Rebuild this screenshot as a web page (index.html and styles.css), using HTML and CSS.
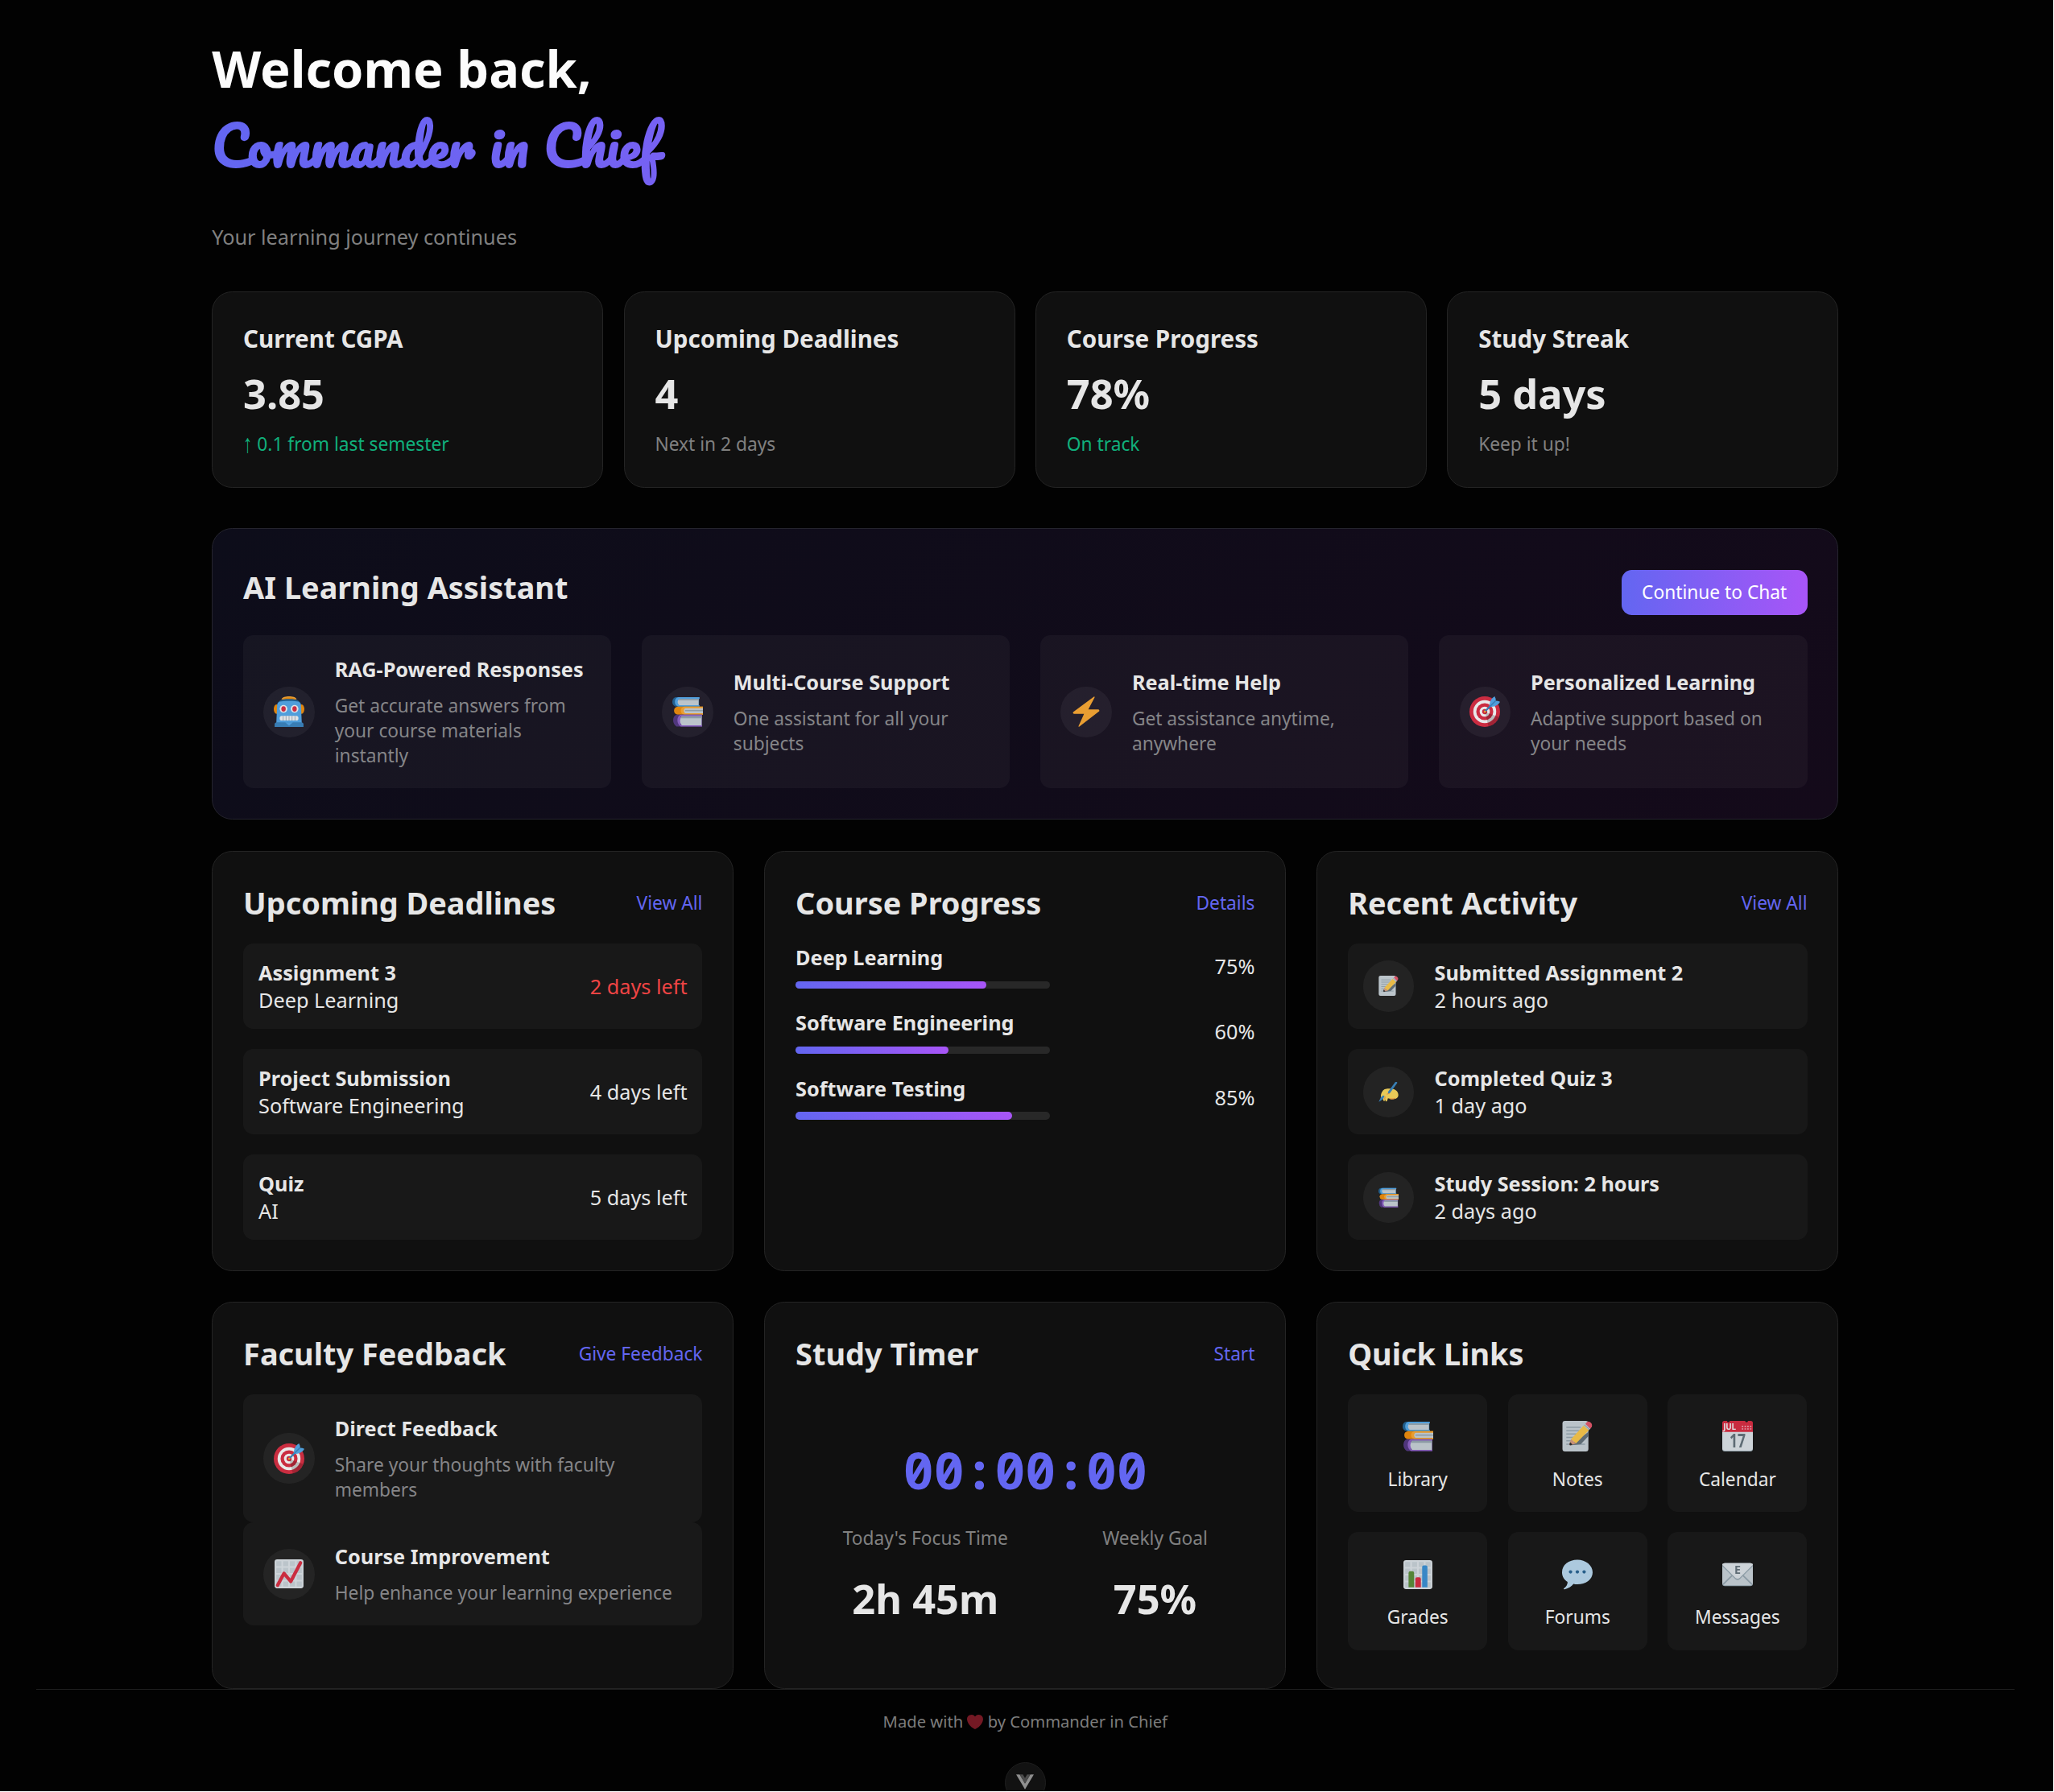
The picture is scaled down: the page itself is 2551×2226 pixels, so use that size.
FILE: index.html
```html
<!DOCTYPE html>
<html lang="en">
<head>
<meta charset="utf-8">
<title>Learning Dashboard</title>
<link rel="stylesheet" href="styles.css">
</head>
<body>
<svg class="sprite" aria-hidden="true">
  <symbol id="robot" viewBox="0 0 36 36">
    <ellipse cx="3.2" cy="15" rx="3.2" ry="5.5" fill="#f4900c"/><ellipse cx="32.8" cy="15" rx="3.2" ry="5.5" fill="#f4900c"/>
    <path d="M9 3.5C10 1 14 0 18 0s8 1 9 3.5z" fill="#ffac33"/><path d="M10 3.5C12 1.8 15 1.5 18 1.5s6 .3 8 2z" fill="#f4900c"/>
    <path d="M4 9c2-4 4-6 14-6s12 2 14 6z" fill="#269"/>
    <path d="M4 10c1-4 3-4.500 14-4.500s13 .500 14 4.500l1 22H3z" fill="#55acee"/>
    <circle cx="11.500" cy="14.800" r="4.500" fill="#f5f8fa"/><circle cx="24.500" cy="14.800" r="4.500" fill="#f5f8fa"/>
    <ellipse cx="11.500" cy="14.800" rx="2.600" ry="3.200" fill="#dd2e44"/><ellipse cx="24.500" cy="14.800" rx="2.600" ry="3.200" fill="#dd2e44"/>
    <rect x="7" y="23" width="22" height="5.500" rx="2.500" fill="#f5f8fa"/>
    <path d="M11 23v5.500M14.500 23v5.500M18 23v5.500M21.500 23v5.500M25 23v5.500" stroke="#aab8c2"/>
    <path d="M1 36v-3q0-2.500 3-2.500h28q3 0 3 2.500v3z" fill="#3b88c3"/><path d="M13.500 30.500h9L18 34.500z" fill="#55acee"/>
  </symbol>
  <symbol id="books" viewBox="0 0 36 36">
    <path d="M31.500 1H4Q0 2 0 6.500T4 12h27.500z" fill="#269"/><path d="M32 1H7Q3 2 3 6.500T7 12h25v-1.500H8V3h24z" fill="#55acee"/><path d="M31 3H8q-3.500 3.500 0 7.500h23z" fill="#ccd6dd"/><path d="M31 3H8l-.7 1.700H31z" fill="#99aab5"/>
    <path d="M36 12H6q-4 1-4 4.700T6 21.500h30z" fill="#f4900c"/><path d="M36 12H14q-4 1-4 4.700t4 4.800h22V20H15v-6h21z" fill="#ffac33"/><path d="M36 14H15q-3 3 0 6h21z" fill="#ccd6dd"/><path d="M36 16H15v1.500h21z" fill="#99aab5"/>
    <path d="M35 21.500H5Q1 23 1 28t4 7.500h30z" fill="#553986"/><path d="M35 21.500H10Q6 23 6 28t4 7.500h25V34H10V23.500h25z" fill="#9266cc"/><path d="M34.500 23.500H11q-4 5 0 10.500h23.500z" fill="#ccd6dd"/><path d="M34.500 23.500H11l-1 2.300h24.500z" fill="#99aab5"/>
  </symbol>
  <symbol id="bolt" viewBox="0 0 36 36">
    <path d="M27 .500 2.700 18.500q-.8 1.800 1 2H15.500L9 35q-.2 1.200 1 .6L33.300 17.600q.7-1.600-1-2.100H20.500L28 1.200Q28 0 27 .500z" fill="#ffac33"/>
  </symbol>
  <symbol id="target" viewBox="0 0 36 36">
    <circle cx="18" cy="18" r="18" fill="#dd2e44"/><circle cx="18" cy="18" r="13.500" fill="#fff"/><circle cx="18" cy="18" r="10" fill="#dd2e44"/><circle cx="18" cy="18" r="6" fill="#fff"/><circle cx="18" cy="18" r="3" fill="#dd2e44"/>
    <path d="m18.200 18.200 4.200 17.200c5.500-1.500 10-5.500 12.300-11z" fill="#000" opacity=".2"/>
    <path d="m18 18 9-9" stroke="#3b88c3" stroke-width="2.200"/><circle cx="18.200" cy="18" r="1.300" fill="#ffac33"/>
    <path d="M23.500 12.500C23.500 6 26 2 29.700 0q1.500 2.500 1.300 5.200 2.800 0 5 1.300c-2 4-6 6-12.500 6z" fill="#55acee"/><path d="M22.500 13.500 31 5" stroke="#3b88c3" stroke-width="1.400"/>
  </symbol>
  <symbol id="memo" viewBox="0 0 36 36">
    <rect x=".5" width="30.500" height="36" rx="3" fill="#ccd6dd"/>
    <path d="M5 7.500h17M5 11.500h19M5 15.500h14M5 19.500h12M5 23.500h7M5 27.500h22" stroke="#99aab5" stroke-width="1.400"/>
    <path d="m9 29 13-1.500 9-9.500v-5z" fill="#66757f"/>
    <path d="M10.500 21.500 25.500 5.500l6 5.500-15 15.500z" fill="#ffcc4d"/><path d="m10.500 21.500 6 5-7 2.300q-1.300-.5-.8-1.800z" fill="#d99e82"/><path d="m9.500 25-.8 2.500q0 1.300 1.400 1.200l2.300-.7z" fill="#292f33"/>
    <path d="m25.500 5.500 2-2 6 5.500-2 2z" fill="#ccd6dd"/><path d="m26.300 4.700 6 5.500" stroke="#99aab5"/><path d="m27.500 3.500 2-2.200Q31 0 33.500 2T35 7l-1.800 2.200z" fill="#ea596e"/>
  </symbol>
  <symbol id="writing" viewBox="0 0 36 36">
    <path d="M7 17c3-5 8-5 13-5 9 0 15 4 15.500 10.500C36 29 30 31 24 30.500c-3 0-5-1.500-7-1.500l-1.500 5q-2 1.500-3 0L12 31l-1 3q-2.500.5-2.500-2L8 29q-3 .5-3.500-2C4 23 5 20 7 17z" fill="#ffdc5d"/>
    <path d="M20 15c2 3-1 6-5 7M20 30c4 1 7 .5 10-1M12 26l-1 5" stroke="#ef9645" stroke-width="1.600" fill="none"/>
    <path d="M31.500 1.500 19 18.500" stroke="#3b88c3" stroke-width="4" stroke-linecap="round"/><path d="m11 25-3 6-7.500 4.500L4 28l4-4z" fill="#3b88c3"/>
  </symbol>
  <symbol id="rise" viewBox="0 0 36 36">
    <rect x="1" y="1" width="34" height="34" rx="3" fill="#e1e8ed"/>
    <path d="M3 3h6v6H3zM11 3h6v6h-6zM19 3h6v6h-6zM27 3h6v6h-6zM3 11h6v6H3zM11 11h6v6h-6zM19 11h6v6h-6zM27 11h6v6h-6zM3 19h6v6H3zM11 19h6v6h-6zM19 19h6v6h-6zM27 19h6v6h-6zM3 27h6v6H3zM11 27h6v6h-6zM19 27h6v6h-6zM27 27h6v6h-6z" fill="#ccd6dd"/>
    <path d="m4.500 31.500 7.500-14 8 9.500L31.500 5" fill="none" stroke="#dd2e44" stroke-width="4" stroke-linecap="round" stroke-linejoin="round"/>
  </symbol>
  <symbol id="calendar" viewBox="0 0 36 36">
    <rect y="4" width="36" height="32" rx="3" fill="#99aab5"/><rect y="3" width="36" height="32" rx="3" fill="#e1e8ed"/>
    <path d="M0 13V2.500Q0 0 2.500 0h3a1.700 1.700 0 0 0 3.400 0h18a1.700 1.700 0 0 0 3.400 0h3.200Q36 0 36 2.500V13z" fill="#dd2e44"/>
    <path d="M23 6.500h12M23 9.500h12" stroke="#f4abba" stroke-width="1.600" stroke-dasharray="1.700 1.500"/>
    <text x="1.200" y="10.600" class="cal-month" fill="#f5f8fa" textLength="15">JUL</text>
    <text x="8.500" y="31.600" class="cal-day" fill="#66757f" textLength="19" lengthAdjust="spacingAndGlyphs">17</text>
  </symbol>
  <symbol id="bars" viewBox="0 0 36 36">
    <rect x="1" y="1" width="34" height="34" rx="3" fill="#e1e8ed"/>
    <path d="M3 3h6v6H3zM11 3h6v6h-6zM19 3h6v6h-6zM27 3h6v6h-6zM3 11h6v6H3zM11 11h6v6h-6zM19 11h6v6h-6zM27 11h6v6h-6zM3 19h6v6H3zM11 19h6v6h-6zM19 19h6v6h-6zM27 19h6v6h-6zM3 27h6v6H3zM11 27h6v6h-6zM19 27h6v6h-6zM27 27h6v6h-6z" fill="#ccd6dd"/>
    <path d="M7 33V16q0-2 2-2h2.500q2 0 2 2v17z" fill="#5c913b"/><path d="M15 33V23q0-2 2-2h2.500q2 0 2 2v10z" fill="#dd2e44"/><path d="M23 33V9q0-2 2-2h2.200q2 0 2 2v24z" fill="#3b94d9"/>
  </symbol>
  <symbol id="speech" viewBox="0 0 36 36">
    <path d="M18 .500C8 .500 0 6.500 0 15.300c0 4.700 2.500 8.700 6.500 11.300.2 3-1.500 6-4.500 7.800q-.3 1 1 .8c5-1.200 8.500-3.700 10.500-6.300q2.200.5 4.500.5c10 0 18-6 18-14.100S28 .500 18 .500z" fill="#bdddf4"/>
    <circle cx="10" cy="14.800" r="2" fill="#2a6797"/><circle cx="18" cy="14.800" r="2" fill="#2a6797"/><circle cx="26" cy="14.800" r="2" fill="#2a6797"/>
  </symbol>
  <symbol id="mail" viewBox="0 0 36 36">
    <rect y="5" width="36" height="26.500" rx="3" fill="#99aab5"/><rect y="4.500" width="36" height="26" rx="3" fill="#ccd6dd"/>
    <path d="m1 29.500 11-11M35 29.500l-11-11" stroke="#99aab5" stroke-width="1.700"/>
    <path d="M0 8q0-3.500 3-3.500h30q3 0 3 3.500L20.500 23.500q-2.500 2-5 0z" fill="#99aab5"/><path d="M0 6.500q0-2 3-2h30q3 0 3 2L20.500 21.700q-2.500 2-5 0z" fill="#e1e8ed"/>
    <text x="18" y="17.500" class="mail-letter" fill="#66757f" text-anchor="middle">E</text>
  </symbol>
  <symbol id="heart" viewBox="0 0 36 36">
    <path d="M35.900 11.800a9.900 9.900 0 0 0-17.900-5.800A9.900 9.900 0 0 0 .4 14.200C1.800 22.500 11.200 31.600 18 34c6.800-2.400 16.200-11.500 17.600-19.800q.3-1.200.3-2.400z" fill="#dd2e44"/>
  </symbol>
</svg>

<div class="page">
  <main class="container">
    <header class="hero">
      <h1 class="hero-title">Welcome back,</h1>
      <div class="hero-name"><span>Commander in Chief</span></div>
      <p class="hero-sub">Your learning journey continues</p>
    </header>

    <section class="stats">
      <div class="card"><h3 class="stat-label">Current CGPA</h3><div class="stat-value">3.85</div><div class="note good"><span class="arrow">↑</span> 0.1 from last semester</div></div>
      <div class="card"><h3 class="stat-label">Upcoming Deadlines</h3><div class="stat-value">4</div><div class="note">Next in 2 days</div></div>
      <div class="card"><h3 class="stat-label">Course Progress</h3><div class="stat-value">78%</div><div class="note good">On track</div></div>
      <div class="card"><h3 class="stat-label">Study Streak</h3><div class="stat-value">5 days</div><div class="note">Keep it up!</div></div>
    </section>

    <section class="card assistant">
      <div class="card-head"><h2>AI Learning Assistant</h2><a class="button">Continue to Chat</a></div>
      <div class="features">
        <div class="feature"><span class="badge"><svg class="icon"><use href="#robot"/></svg></span><div><h4>RAG-Powered Responses</h4><p>Get accurate answers from your course materials instantly</p></div></div>
        <div class="feature"><span class="badge"><svg class="icon"><use href="#books"/></svg></span><div><h4>Multi-Course Support</h4><p>One assistant for all your subjects</p></div></div>
        <div class="feature"><span class="badge"><svg class="icon"><use href="#bolt"/></svg></span><div><h4>Real-time Help</h4><p>Get assistance anytime, anywhere</p></div></div>
        <div class="feature"><span class="badge"><svg class="icon"><use href="#target"/></svg></span><div><h4>Personalized Learning</h4><p>Adaptive support based on your needs</p></div></div>
      </div>
    </section>

    <section class="grid">
      <div class="card">
        <div class="card-head"><h2>Upcoming Deadlines</h2><a class="link">View All</a></div>
        <div class="list">
          <div class="item"><div class="grow"><h4>Assignment 3</h4><p>Deep Learning</p></div><span class="urgent">2 days left</span></div>
          <div class="item"><div class="grow"><h4>Project Submission</h4><p>Software Engineering</p></div><span>4 days left</span></div>
          <div class="item"><div class="grow"><h4>Quiz</h4><p>AI</p></div><span>5 days left</span></div>
        </div>
      </div>

      <div class="card">
        <div class="card-head"><h2>Course Progress</h2><a class="link">Details</a></div>
        <div class="list">
          <div class="course"><div><h4>Deep Learning</h4><div class="track"><div class="fill" style="width:75%"></div></div></div><span>75%</span></div>
          <div class="course"><div><h4>Software Engineering</h4><div class="track"><div class="fill" style="width:60%"></div></div></div><span>60%</span></div>
          <div class="course"><div><h4>Software Testing</h4><div class="track"><div class="fill" style="width:85%"></div></div></div><span>85%</span></div>
        </div>
      </div>

      <div class="card">
        <div class="card-head"><h2>Recent Activity</h2><a class="link">View All</a></div>
        <div class="list">
          <div class="item"><span class="badge"><svg class="icon small"><use href="#memo"/></svg></span><div><h4>Submitted Assignment 2</h4><p>2 hours ago</p></div></div>
          <div class="item"><span class="badge"><svg class="icon small"><use href="#writing"/></svg></span><div><h4>Completed Quiz 3</h4><p>1 day ago</p></div></div>
          <div class="item"><span class="badge"><svg class="icon small"><use href="#books"/></svg></span><div><h4>Study Session: 2 hours</h4><p>2 days ago</p></div></div>
        </div>
      </div>

      <div class="card">
        <div class="card-head"><h2>Faculty Feedback</h2><a class="link">Give Feedback</a></div>
        <div class="feature"><span class="badge"><svg class="icon"><use href="#target"/></svg></span><div><h4>Direct Feedback</h4><p>Share your thoughts with faculty members</p></div></div>
        <div class="feature"><span class="badge"><svg class="icon"><use href="#rise"/></svg></span><div><h4>Course Improvement</h4><p>Help enhance your learning experience</p></div></div>
      </div>

      <div class="card">
        <div class="card-head"><h2>Study Timer</h2><a class="link">Start</a></div>
        <div class="timer">
          <div class="clock">00:00:00</div>
          <div class="timer-stats">
            <div><div class="note">Today's Focus Time</div><div class="stat-value">2h 45m</div></div>
            <div><div class="note">Weekly Goal</div><div class="stat-value">75%</div></div>
          </div>
        </div>
      </div>

      <div class="card">
        <div class="card-head"><h2>Quick Links</h2></div>
        <div class="tiles">
          <a class="tile"><svg class="icon"><use href="#books"/></svg><span>Library</span></a>
          <a class="tile"><svg class="icon"><use href="#memo"/></svg><span>Notes</span></a>
          <a class="tile"><svg class="icon"><use href="#calendar"/></svg><span>Calendar</span></a>
          <a class="tile"><svg class="icon"><use href="#bars"/></svg><span>Grades</span></a>
          <a class="tile"><svg class="icon"><use href="#speech"/></svg><span>Forums</span></a>
          <a class="tile"><svg class="icon"><use href="#mail"/></svg><span>Messages</span></a>
        </div>
      </div>
    </section>
  </main>

  <footer class="footer">
    <p class="credit">Made with <svg class="heart"><use href="#heart"/></svg> by Commander in Chief</p>
    <div class="devtools"><svg viewBox="0 0 24 20"><path d="M0 0h4.800L12 12.200 19.200 0H24L12 20z" fill="#8f8f8f"/><path d="M4.800 0h4.400L12 4.800 14.800 0h4.400L12 12.200z" fill="#4b4b4b"/></svg></div>
  </footer>
</div>
</body>
</html>
```
FILE: styles.css
```css
html {
  font-size: 25.263px;
  background: #fff;
}

* {
  box-sizing: border-box;
  margin: 0;
  padding: 0;
}

body {
  font-family: "Noto Sans", sans-serif;
  color: #e6e6e6;
  overflow: hidden;
}

.sprite {
  display: none;
}

.page {
  width: 2550px;
  height: 2225px;
  padding-right: 3.4px;
  overflow: hidden;
  background: #020202;
}

.container {
  width: 2020.2px;
  margin: 0 auto;
  padding-top: 42px;
}

.hero {
  display: flex;
  flex-direction: column;
  margin-bottom: 51.5px;
}

.hero-title {
  font-size: 2.5rem;
  line-height: 86px;
  font-weight: 700;
  color: #fcfcfc;
}

.hero-name {
  height: 148.5px;
  padding-top: 5px;
  font-family: Pacifico, Lato, cursive;
  font-size: 65.4px;
  font-weight: 700;
  word-spacing: 2px;
  line-height: 96px;
  color: transparent;
  background: linear-gradient(90deg, #6366f1, #a855f7);
  -webkit-background-clip: text;
  background-clip: text;
}

.hero-sub {
  color: #808080;
}

.stats {
  display: grid;
  grid-template-columns: repeat(4, 1fr);
  gap: 1rem;
  margin-bottom: 50.2px;
}

.card {
  padding: 1.5rem;
  border: 1px solid #242424;
  border-radius: 1rem;
  background: #101010;
}

.stat-label {
  font-size: 1.17rem;
  font-weight: 700;
  line-height: 40px;
}

.stat-value {
  font-size: 2rem;
  font-weight: 700;
  margin: .5rem 0;
}

.stats .stat-value {
  margin-bottom: 13.6px;
}

.note {
  font-size: .9rem;
  color: #808080;
}

.note.good {
  color: #10b07c;
}

.arrow {
  display: inline-block;
  line-height: 1;
  transform: translateY(-1px) scaleY(1.4);
}

.assistant {
  margin-bottom: 38.7px;
  border-color: #25242e;
  background: linear-gradient(135deg, #0d0d1a, #140a1a);
}

.card-head {
  display: flex;
  align-items: center;
  justify-content: space-between;
  margin-bottom: 1rem;
}

h2 {
  font-size: 1.5rem;
  font-weight: 700;
  line-height: 51px;
}

h4 {
  font-size: 1rem;
  font-weight: 700;
}

.link {
  font-size: .9rem;
  color: #6366f1;
}

.button {
  margin-top: .5rem;
  padding: .5rem 1rem;
  border-radius: .5rem;
  font-size: .9rem;
  color: #fff;
  background: linear-gradient(90deg, #6366f1, #a855f7);
}

.features {
  display: grid;
  grid-template-columns: repeat(4, 1fr);
  gap: 1.5rem;
}

.feature {
  display: flex;
  align-items: center;
  gap: 1rem;
  padding: 1rem;
  border-radius: .5rem;
  background: rgba(255, 255, 255, .04);
}

.feature h4 {
  margin-bottom: .5rem;
}

.feature p {
  font-size: .9rem;
  color: #858588;
}

.badge {
  display: flex;
  flex: none;
  align-items: center;
  justify-content: center;
  width: 2.5rem;
  height: 2.5rem;
  border-radius: 50%;
  background: rgba(255, 255, 255, .05);
}

.icon {
  display: block;
  width: 38px;
  height: 38px;
  opacity: .9;
}

.icon.small {
  width: 25px;
  height: 25px;
}

.cal-month {
  font: 700 9.400px "Open Sans", sans-serif;
}

.cal-day {
  font: 700 22px "Open Sans", sans-serif;
}

.mail-letter {
  font: 700 13.500px "Open Sans", sans-serif;
}

.grid {
  display: grid;
  grid-template-columns: repeat(3, 1fr);
  gap: 1.5rem;
}

.list {
  display: flex;
  flex-direction: column;
  gap: 1rem;
}

.item {
  display: flex;
  align-items: center;
  gap: 1rem;
  padding: .75rem;
  border-radius: .5rem;
  background: rgba(255, 255, 255, .035);
}

.grow {
  flex: 1;
}

.urgent {
  color: #ef4444;
}

.course {
  display: flex;
  align-items: center;
  justify-content: space-between;
}

.track {
  width: 12.5rem;
  height: .375rem;
  margin-top: .5rem;
  border-radius: 5px;
  background: #282828;
}

.fill {
  height: 100%;
  border-radius: 5px;
  background: linear-gradient(90deg, #6366f1, #a855f7);
}

.timer {
  padding: 51.4px 0 26.5px;
  text-align: center;
}

.clock {
  font-family: "Noto Sans Mono", "DejaVu Sans Mono", monospace;
  font-size: 2.5rem;
  font-weight: 700;
  line-height: 86px;
  color: #6366f1;
}

.timer-stats {
  display: flex;
  justify-content: space-around;
  margin-top: 1rem;
}

.timer-stats .stat-value {
  margin-top: 1rem;
}

.tiles {
  display: grid;
  grid-template-columns: repeat(3, 1fr);
  gap: 1rem;
}

.tile {
  display: flex;
  flex-direction: column;
  align-items: center;
  gap: .5rem;
  padding: 1rem;
  border-radius: .5rem;
  font-size: .9rem;
  background: rgba(255, 255, 255, .035);
}

.tile .icon {
  margin: 8px 0 6px;
}

.footer {
  display: flex;
  flex-direction: column;
  align-items: center;
  width: 2457px;
  margin: 0 auto;
  padding-top: 1rem;
  border-top: 1px solid #1f1f1f;
}

.credit {
  font-size: .8rem;
  line-height: 28px;
  color: #7c7c7c;
}

.heart {
  width: 20px;
  height: 20px;
  opacity: .52;
  vertical-align: -3px;
}

.devtools {
  display: flex;
  justify-content: center;
  width: 51px;
  height: 51px;
  margin-top: 37px;
  padding-top: 14px;
  border: 1px solid #1e1e1e;
  border-radius: 50%;
  background: #121212;
}

.devtools svg {
  width: 22px;
  height: 19px;
}
```
